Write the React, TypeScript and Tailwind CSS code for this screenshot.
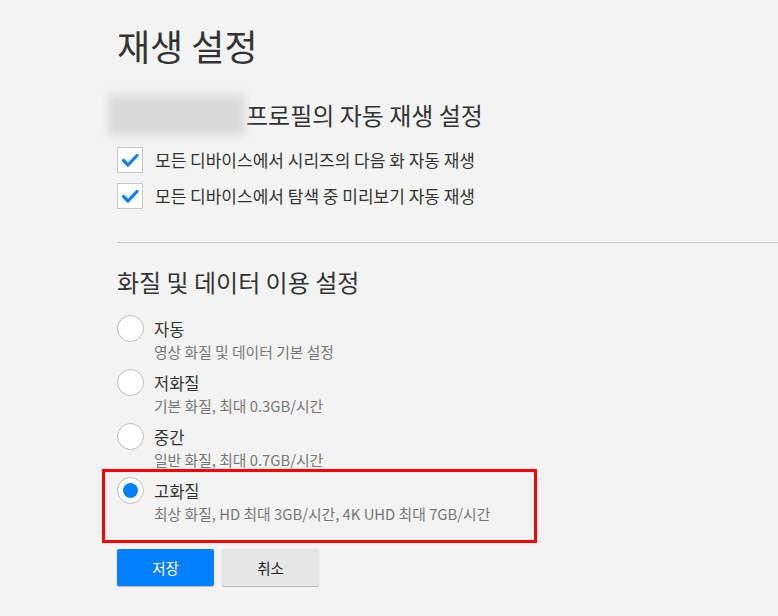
import React from "react";

const font = { fontFamily: '"Noto Sans CJK KR", "Noto Sans", sans-serif' };

function Check() {
  return (
    <div className="w-[26px] h-[26px] bg-white border border-[#c8c8c8] flex items-center justify-center shrink-0">
      <svg width="20" height="20" viewBox="0 0 20 20">
        <path d="M3.5 10.5 L8 15 L17 5.5" fill="none" stroke="#0f7ff5" strokeWidth="3.2" strokeLinecap="round" strokeLinejoin="round" />
      </svg>
    </div>
  );
}

function Radio({ on }: { on?: boolean }) {
  return (
    <div className="w-[27px] h-[27px] rounded-full bg-white border border-[#bdbdbd] flex items-center justify-center shrink-0">
      {on && <div className="w-[15px] h-[15px] rounded-full bg-[#0080ff]" />}
    </div>
  );
}

const options = [
  { t: "자동", s: "영상 화질 및 데이터 기본 설정" },
  { t: "저화질", s: "기본 화질, 최대 0.3GB/시간" },
  { t: "중간", s: "일반 화질, 최대 0.7GB/시간" },
  { t: "고화질", s: "최상 화질, HD 최대 3GB/시간, 4K UHD 최대 7GB/시간", on: true },
];

export default function App() {
  return (
    <div className="w-[778px] h-[616px] bg-[#f3f3f3] overflow-hidden text-[#333]" style={font}>
      <div className="pl-[117px] pt-[22px]">
        <h1 className="text-[36px] leading-[46px] text-[#333] font-normal">재생 설정</h1>
        <div className="flex items-center mt-[27px] -ml-[9px] h-[40px]">
          <div className="w-[137px] h-[40px] bg-[#dadada] blur-[4px]" />
          <span className="text-[24px] leading-[40px] text-[#333] ml-[1px]">프로필의 자동 재생 설정</span>
        </div>
        <div className="flex flex-col gap-[10px] mt-[12px]">
          <div className="flex items-center gap-[12px]">
            <Check />
            <span className="text-[17px] leading-[26px]">모든 디바이스에서 시리즈의 다음 화 자동 재생</span>
          </div>
          <div className="flex items-center gap-[12px]">
            <Check />
            <span className="text-[17px] leading-[26px]">모든 디바이스에서 탐색 중 미리보기 자동 재생</span>
          </div>
        </div>
        <div className="h-px bg-[#cccccc] mt-[33px]" />
        <h2 className="text-[24px] leading-[32px] mt-[23px] text-[#333]">화질 및 데이터 이용 설정</h2>
        <div className="flex flex-col mt-[17px]">
          {options.map((o) => (
            <div key={o.t} className="relative h-[54px]">
              {o.on && (
                <div className="absolute -left-[15px] -top-[8px] w-[435px] h-[74px] border-[3px] border-[#ff0000]" />
              )}
              <div className="flex items-center gap-[10px]">
                <Radio on={o.on} />
                <span className="text-[16.5px] leading-[26px]">{o.t}</span>
              </div>
              <div className="pl-[37px] text-[14.8px] leading-[20px] text-[#777]">{o.s}</div>
            </div>
          ))}
        </div>
        <div className="flex gap-[8px] mt-[18px]">
          <button className="w-[97px] h-[37px] bg-[#0080ff] text-white text-[14.5px] rounded-[2px] shadow-[0_1px_1px_rgba(0,0,0,0.25)]">저장</button>
          <button className="w-[97px] h-[37px] bg-[#e6e6e6] text-[#222] text-[14.5px] rounded-[2px] shadow-[0_1px_1px_rgba(0,0,0,0.25)]">취소</button>
        </div>
      </div>
    </div>
  );
}
